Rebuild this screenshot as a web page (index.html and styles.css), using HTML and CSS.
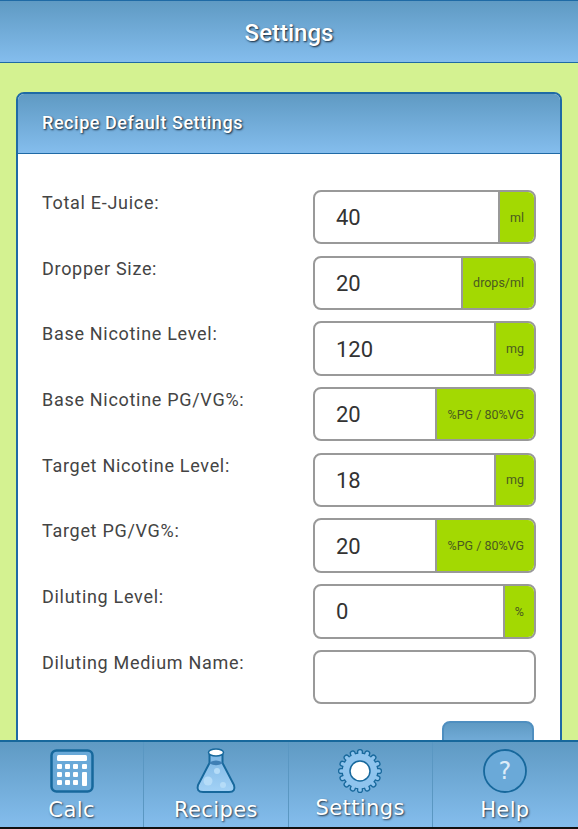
FILE: index.html
```html
<!DOCTYPE html>
<html lang="en">
<head>
<meta charset="UTF-8" />
<meta name="viewport" content="width=device-width, initial-scale=1" />
<title>Settings</title>
<link rel="stylesheet" href="styles.css">
</head>
<body>
  <header class="top-bar">
    <h1>Settings</h1>
  </header>

  <main class="content">
    <section class="card">
      <div class="card-head">
        <h2>Recipe Default Settings</h2>
      </div>
      <form class="card-body">
        <div class="row">
          <label for="total">Total E-Juice:</label>
          <div class="field"><input id="total" type="text" value="40"><span class="unit">ml</span></div>
        </div>
        <div class="row">
          <label for="dropper">Dropper Size:</label>
          <div class="field"><input id="dropper" type="text" value="20"><span class="unit">drops/ml</span></div>
        </div>
        <div class="row">
          <label for="base-nic">Base Nicotine Level:</label>
          <div class="field"><input id="base-nic" type="text" value="120"><span class="unit">mg</span></div>
        </div>
        <div class="row">
          <label for="base-pg">Base Nicotine PG/VG%:</label>
          <div class="field"><input id="base-pg" type="text" value="20"><span class="unit">%PG / 80%VG</span></div>
        </div>
        <div class="row">
          <label for="target-nic">Target Nicotine Level:</label>
          <div class="field"><input id="target-nic" type="text" value="18"><span class="unit">mg</span></div>
        </div>
        <div class="row">
          <label for="target-pg">Target PG/VG%:</label>
          <div class="field"><input id="target-pg" type="text" value="20"><span class="unit">%PG / 80%VG</span></div>
        </div>
        <div class="row">
          <label for="diluting">Diluting Level:</label>
          <div class="field"><input id="diluting" type="text" value="0"><span class="unit">%</span></div>
        </div>
        <div class="row">
          <label for="medium">Diluting Medium Name:</label>
          <div class="field"><input id="medium" type="text" value=""></div>
        </div>
        <div class="actions">
          <button class="save-btn" type="button" aria-label="Save"></button>
        </div>
      </form>
    </section>
  </main>

  <nav class="tab-bar" aria-label="Main">
    <a class="tab" href="#">
      <svg class="tab-icon" viewBox="0 0 44 44" aria-hidden="true">
        <rect x="1.5" y="1.5" width="41" height="41" rx="5" fill="#6aa9d8" stroke="#17689c" stroke-width="2.5"/>
        <rect x="7" y="6" width="30" height="6" rx="1.5" fill="#fff"/>
        <g fill="#fff">
          <rect x="7" y="15" width="5" height="5" rx="1"/><rect x="15" y="15" width="5" height="5" rx="1"/><rect x="23" y="15" width="5" height="5" rx="1"/><rect x="32" y="15" width="5" height="5" rx="1"/>
          <rect x="7" y="23" width="5" height="5" rx="1"/><rect x="15" y="23" width="5" height="5" rx="1"/><rect x="23" y="23" width="5" height="5" rx="1"/>
          <rect x="7" y="31" width="5" height="5" rx="1"/><rect x="15" y="31" width="5" height="5" rx="1"/><rect x="23" y="31" width="5" height="5" rx="1"/>
          <rect x="32" y="23" width="5" height="14" rx="1"/>
        </g>
      </svg>
      <span>Calc</span>
    </a>
    <a class="tab" href="#">
      <svg class="tab-icon" viewBox="0 0 44 46" aria-hidden="true">
        <defs>
          <linearGradient id="flask-fill" x1="0" y1="0" x2="0" y2="1">
            <stop offset="0" stop-color="#7db6e4"/>
            <stop offset="1" stop-color="#a3d2f6"/>
          </linearGradient>
        </defs>
        <path d="M15.5 6 V15 L4 37 Q2 44 9 44 H35 Q42 44 40 37 L28.500 15 V6" fill="url(#flask-fill)" stroke="#17689c" stroke-width="2"/>
        <path d="M16 14 Q22 11 28 14 L28.500 15.500 Q22 19 15.500 15.500Z" fill="#3f7fb5"/>
        <ellipse cx="22" cy="4.500" rx="7.500" ry="3.500" fill="#fff" stroke="#17689c" stroke-width="1.500"/>
        <circle cx="23" cy="23" r="3" fill="#b5dcf8"/>
        <circle cx="14" cy="33" r="4.500" fill="#b5dcf8"/>
        <circle cx="29" cy="37" r="3" fill="#b5dcf8"/>
      </svg>
      <span>Recipes</span>
    </a>
    <a class="tab tab-settings" href="#">
      <svg class="tab-icon" viewBox="0 0 44 44" aria-hidden="true">
        <defs>
          <rect id="tooth" x="20.300" y="1.300" width="3.400" height="6" rx="1.500"/>
          <g id="teeth-2"><use href="#tooth"/><use href="#tooth" transform="rotate(180 22 22)"/></g>
          <g id="teeth-4"><use href="#teeth-2"/><use href="#teeth-2" transform="rotate(90 22 22)"/></g>
          <g id="teeth-8"><use href="#teeth-4"/><use href="#teeth-4" transform="rotate(45 22 22)"/></g>
          <g id="teeth-16"><use href="#teeth-8"/><use href="#teeth-8" transform="rotate(22.500 22 22)"/></g>
        </defs>
        <use href="#teeth-16" fill="#17689c" stroke="#17689c" stroke-width="2.600"/>
        <circle cx="22" cy="22" r="18.500" fill="#17689c"/>
        <use href="#teeth-16" fill="#8fc4ee"/>
        <circle cx="22" cy="22" r="17.200" fill="#8fc4ee"/>
        <circle cx="22" cy="22" r="10" fill="#fff" stroke="#17689c" stroke-width="1.500"/>
      </svg>
      <span>Settings</span>
    </a>
    <a class="tab" href="#">
      <svg class="tab-icon" viewBox="0 0 44 44" aria-hidden="true">
        <circle cx="22" cy="22" r="21" fill="#6aa9d8" stroke="#17689c" stroke-width="1.800"/>
        <text class="help-mark" x="22" y="30" text-anchor="middle">?</text>
      </svg>
      <span>Help</span>
    </a>
  </nav>
</body>
</html>
```

FILE: styles.css
```css
* {
  box-sizing: border-box;
}
html,
body {
  height: 100%;
}
body {
  margin: 0;
  font-family: Roboto, sans-serif;
  background: #d4f291;
  color: #444;
  overflow: hidden;
}

/* Top title bar */
.top-bar {
  height: 63px;
  display: flex;
  align-items: center;
  justify-content: center;
  padding-top: 3px;
  background: linear-gradient(180deg, #5f9ac3, #84bded);
  border-top: 1px solid #1f6aa5;
  border-bottom: 1px solid #1f6aa5;
}
.top-bar h1 {
  margin: 0;
  font-size: 24px;
  font-weight: 500;
  color: #fff;
  text-shadow: 1px 1px 2px #123;
}

/* Card */
.content {
  padding: 29px 16px 0;
}
.card {
  background: #fff;
  border: 2px solid #1f6aa5;
  border-radius: 8px;
}
.card-head {
  height: 60px;
  display: flex;
  align-items: center;
  padding: 0 24px 2px;
  background: linear-gradient(180deg, #5f9ac3, #84bded);
  border-bottom: 1px solid #1f6aa5;
  border-radius: 6px 6px 0 0;
}
.card-head h2 {
  margin: 0;
  font-size: 18px;
  font-weight: 500;
  letter-spacing: 0.55px;
  color: #fff;
  text-shadow: 1px 1px 2px #123;
}
.card-body {
  padding: 36px 24px 0;
}

/* Form rows */
.row {
  display: grid;
  grid-template-columns: 271px 223px;
  height: 54.4px;
  margin-bottom: 11.3px;
}
.row label {
  font-size: 18px;
  line-height: 24px;
  padding-top: 1px;
  letter-spacing: 0.7px;
  color: #444;
}
.field {
  display: flex;
  height: 54.4px;
  background: #fff;
  border: 2px solid #999;
  border-radius: 8px;
  overflow: hidden;
}
.field input {
  flex: 1;
  min-width: 0;
  border: none;
  outline: none;
  padding: 1px 0 0 21px;
  font-family: inherit;
  font-size: 22px;
  color: #333;
  background: transparent;
}
.unit {
  display: flex;
  align-items: center;
  padding: 0 10px;
  font-size: 12.5px;
  color: #4a5a20;
  background: #a3d902;
  border-left: 2px solid #999;
}
.actions {
  display: flex;
  justify-content: flex-end;
  margin-top: 16.5px;
}
.save-btn {
  width: 92px;
  height: 40px;
  margin-right: 2px;
  background: linear-gradient(180deg, #5f9ac3, #84bded);
  border: 2px solid #4f8fc0;
  border-radius: 8px;
}

/* Bottom tab bar */
.tab-bar {
  position: fixed;
  left: 0;
  right: 0;
  bottom: 0;
  height: 89px;
  display: grid;
  grid-template-columns: repeat(4, 1fr);
  padding-right: 1px;
  background: linear-gradient(180deg, #5f9ac3, #84bded);
  border-top: 2px solid #17689c;
  border-bottom: 2px solid #111;
}
.tab {
  display: flex;
  flex-direction: column;
  align-items: center;
  padding-top: 6px;
  border-right: 1px solid #5a97c2;
  font-family: "DejaVu Sans", sans-serif;
  font-size: 21px;
  letter-spacing: 0.4px;
  line-height: 26px;
  color: #fff;
  text-decoration: none;
  text-shadow: 1px 1px 2px #234;
}
.tab:last-child {
  border-right: none;
}
.tab-icon {
  width: 44px;
  height: 46px;
  flex: none;
}
.tab span {
  margin-top: 3px;
}
.tab-settings span {
  margin-top: 1px;
}
.help-mark {
  font-family: "DejaVu Sans", sans-serif;
  font-size: 24px;
  fill: #dcecf8;
  text-shadow: none;
}
```
